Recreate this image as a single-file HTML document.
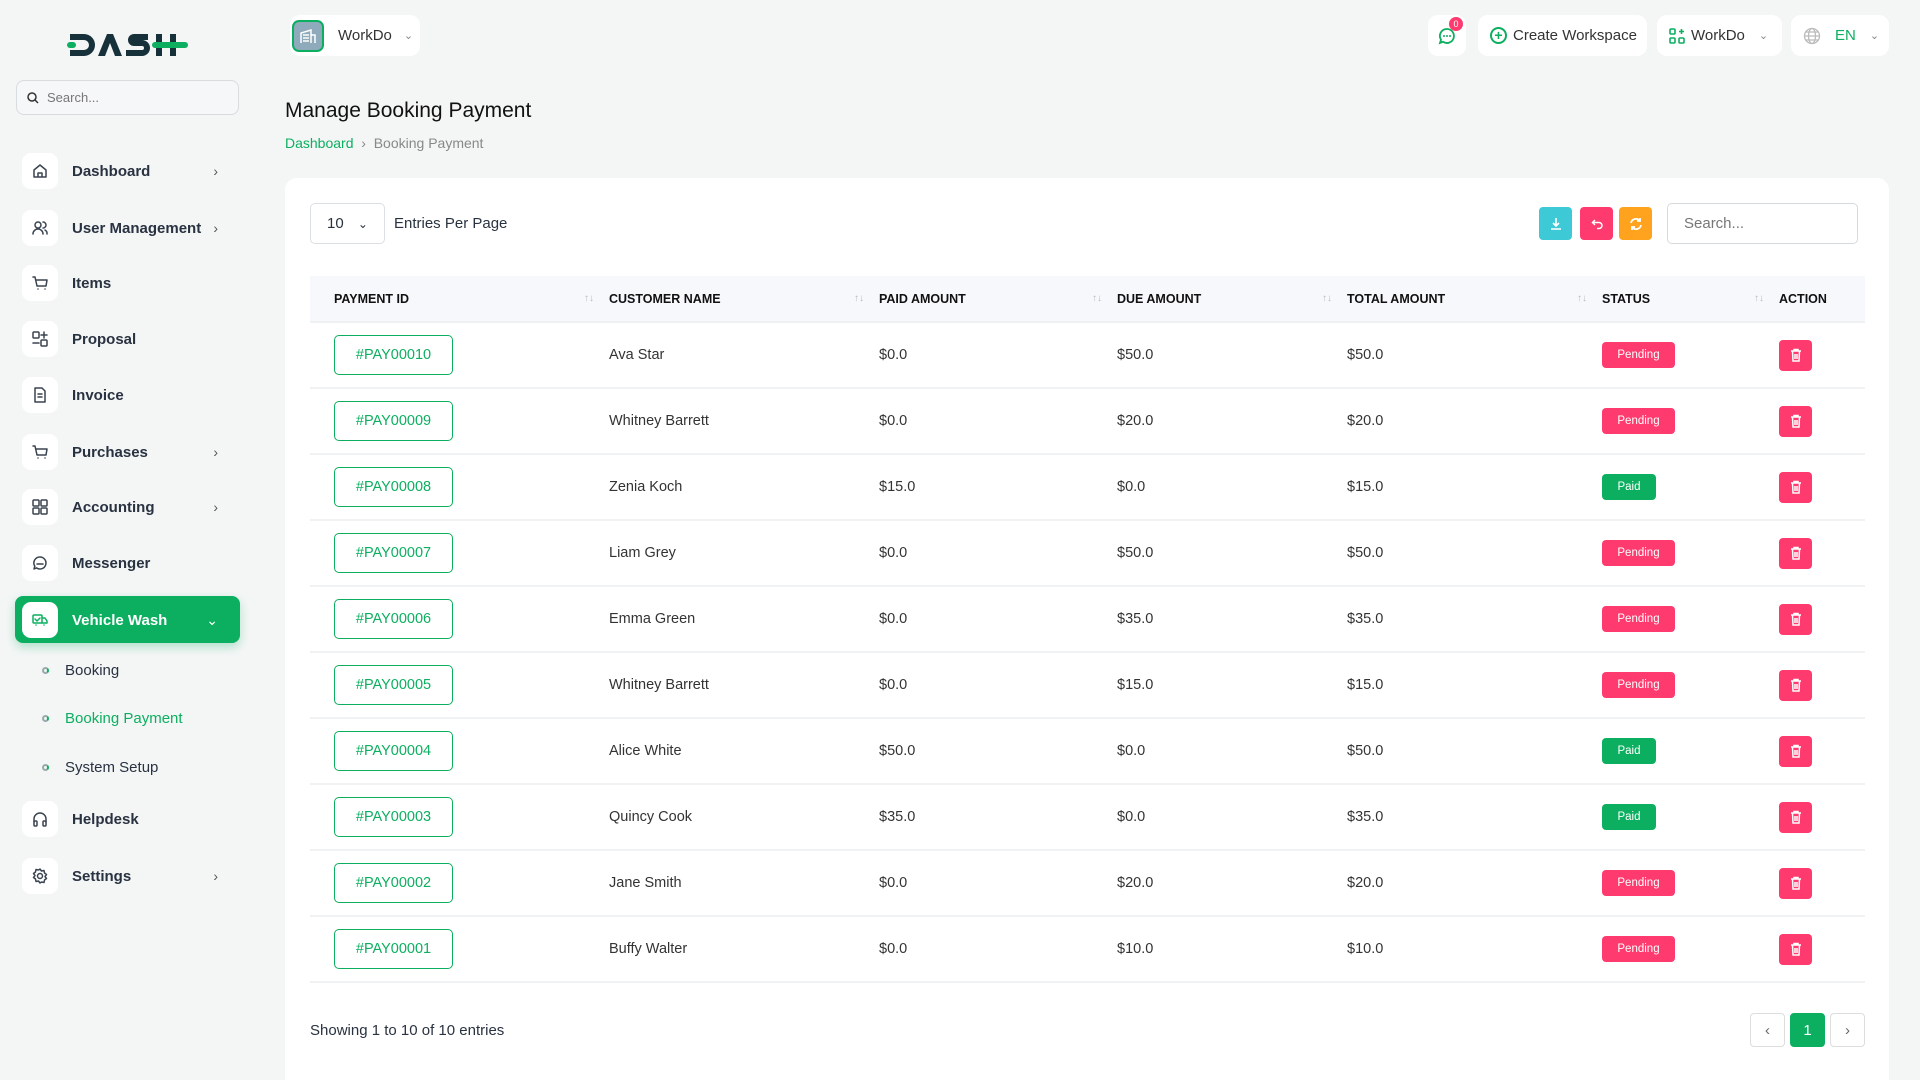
<!DOCTYPE html>
<html><head><meta charset="utf-8"><style>
*{box-sizing:border-box;margin:0;padding:0}
html{overflow:hidden;width:1920px;height:1080px}
body{width:1920px;height:1080px;overflow:hidden;background:#f4f6f6;font-family:"Liberation Sans",sans-serif;color:#293240;position:relative}
.abs{position:absolute}
.logo{left:64px;top:28px}
.sb-search{left:16px;top:80px;width:223px;height:35px;border:1px solid #d8dcdf;border-radius:8px;background:#f6f7f8;font-size:13px;color:#777;padding:9px 0 0 30px}
.nav{left:22px;width:210px;height:40px;display:flex;align-items:center;font-size:15px;font-weight:bold;color:#293240}
.nav .ic{width:36px;height:36px;background:#fff;border-radius:9px;display:flex;align-items:center;justify-content:center;margin-right:14px}
.nav .ic svg{width:18px;height:18px;fill:none;stroke:#3a4450;stroke-width:1.5;stroke-linecap:round;stroke-linejoin:round}
.nav .ch{position:absolute;right:14px;font-weight:normal;color:#555;font-size:14px}
.active{left:15px;width:225px;height:47px;top:596px;background:#0caf60;border-radius:8px;box-shadow:0 4px 10px rgba(12,175,96,.3)}
.sub{left:42px;font-size:15px;color:#293240;display:flex;align-items:center}
.sub i{width:7px;height:7px;border:2px solid #9aa;border-radius:50%;margin-right:16px;border-right-color:#0caf60}
.tb{background:#fff;border-radius:10px;height:41px;top:15px;display:flex;align-items:center;font-size:15px;color:#333}
h1{position:absolute;left:285px;top:99px;font-size:21px;font-weight:normal;color:#111}
.bc{left:285px;top:135px;font-size:14px;color:#888}
.card{left:285px;top:178px;width:1604px;height:902px;background:#fff;border-radius:12px 12px 0 0}
.btn{width:33px;height:33px;border-radius:4px;top:207px;display:flex;align-items:center;justify-content:center}
table{position:absolute;left:310px;top:276px;width:1555px;border-collapse:collapse;font-size:14.5px}
th{height:46px;background:#f6f8fb;text-align:left;font-size:12.5px;font-weight:bold;color:#111;position:relative;border-bottom:2px solid #eef0f2}
td{height:66px;border-bottom:2px solid #f0f2f3;color:#333}
.sa{position:absolute;color:#bbb;font-size:10px;font-weight:normal;top:17px}
.pid{display:inline-block;width:119px;height:40px;border:1px solid #0caf60;border-radius:5px;color:#0caf60;text-align:center;line-height:38px;font-size:14.5px}
.pe{display:inline-block;width:73px;height:26px;border-radius:4px;background:#ff3a6e;color:#fff;font-size:11.5px;text-align:center;line-height:26px}
.pa{display:inline-block;width:54px;height:26px;border-radius:4px;background:#0caf60;color:#fff;font-size:11.5px;text-align:center;line-height:26px}
.del{display:inline-block;width:33px;height:31px;border-radius:4px;background:#ff3a6e;vertical-align:middle;text-align:center;padding-top:8px}
.pg{top:1013px;width:35px;height:34px;border:1px solid #ddd;border-radius:4px;display:flex;align-items:center;justify-content:center;color:#666;font-size:15px;background:#fff}
</style></head><body>
<div class="abs logo"><svg width="126" height="34" viewBox="0 0 126 34">
<g fill="#17313b">
<path d="M6 6h14a11 11 0 0 1 0 22H6v-6h14a5 5 0 0 0 0-10H6z"/>
<path d="M34 28l9-22h6l9 22h-7l-5-13-5 13z"/>
<path d="M84 6H70a6 6 0 0 0 0 12h8a2 2 0 0 1 0 4H62v6h16a8 8 0 0 0 0-16h-8V12h14z"/>
<rect x="92" y="6" width="6" height="22"/><rect x="106" y="6" width="6" height="22"/></g>
<rect x="3" y="14" width="9" height="6" rx="3" fill="#0caf60"/>
<rect x="88" y="14" width="36" height="6" rx="3" fill="#0caf60"/></svg></div>
<div class="abs sb-search"><svg class="abs" style="left:10px;top:11px" width="12" height="12" viewBox="0 0 12 12"><circle cx="5" cy="5" r="4" fill="none" stroke="#333" stroke-width="1.5"/><path d="M8 8l3 3" stroke="#333" stroke-width="1.5"/></svg>Search...</div>

<div class="abs nav" style="top:151px"><span class="ic"><svg viewBox="0 0 18 18"><path d="M3 8l6-5 6 5v7H3z M7 15v-4h4v4"/></svg></span>Dashboard<span class="ch">›</span></div>
<div class="abs nav" style="top:208px"><span class="ic"><svg viewBox="0 0 18 18"><circle cx="7" cy="6" r="3"/><path d="M2 15a5 5 0 0 1 10 0M12 3a3 3 0 0 1 0 6M14 11a4 4 0 0 1 2 4"/></svg></span>User Management<span class="ch">›</span></div>
<div class="abs nav" style="top:263px"><span class="ic"><svg viewBox="0 0 18 18"><path d="M2 3h2l2 9h9l1-6H5M7 15h.01M14 15h.01"/></svg></span>Items</div>
<div class="abs nav" style="top:319px"><span class="ic"><svg viewBox="0 0 18 18"><rect x="2" y="2" width="6" height="6" rx="1"/><rect x="10" y="10" width="6" height="6" rx="1"/><path d="M10 5h6M13 2v6M2 13h6"/></svg></span>Proposal</div>
<div class="abs nav" style="top:375px"><span class="ic"><svg viewBox="0 0 18 18"><path d="M4 2h7l3 3v11H4z M7 8h4M7 11h4"/></svg></span>Invoice</div>
<div class="abs nav" style="top:432px"><span class="ic"><svg viewBox="0 0 18 18"><path d="M2 3h2l2 9h9l1-6H5M7 15h.01M14 15h.01"/></svg></span>Purchases<span class="ch">›</span></div>
<div class="abs nav" style="top:487px"><span class="ic"><svg viewBox="0 0 18 18"><rect x="2" y="2" width="6" height="6" rx="1"/><rect x="10" y="2" width="6" height="6" rx="1"/><rect x="2" y="10" width="6" height="6" rx="1"/><rect x="10" y="10" width="6" height="6" rx="1"/></svg></span>Accounting<span class="ch">›</span></div>
<div class="abs nav" style="top:543px"><span class="ic"><svg viewBox="0 0 18 18"><path d="M9 3a6 6 0 1 1-3.5 10.9L3 15l.8-2.8A6 6 0 0 1 9 3zM6 10h6"/></svg></span>Messenger</div>
<div class="abs active"></div>
<div class="abs nav" style="top:600px;color:#fff"><span class="ic"><svg viewBox="0 0 18 18" style="stroke:#0caf60"><rect x="2" y="4" width="9" height="8" rx="1"/><path d="M11 7h3l2 3v2h-5M5 14h.01M13 14h.01M4 8l2 2 3-3"/></svg></span>Vehicle Wash<span class="ch" style="color:#fff">⌄</span></div>
<div class="abs sub" style="top:662px"><i></i>Booking</div>
<div class="abs sub" style="top:710px;color:#0caf60"><i></i>Booking Payment</div>
<div class="abs sub" style="top:759px"><i></i>System Setup</div>
<div class="abs nav" style="top:799px"><span class="ic"><svg viewBox="0 0 18 18"><path d="M3 12V9a6 6 0 0 1 12 0v3"/><rect x="3" y="11" width="3" height="5" rx="1"/><rect x="12" y="11" width="3" height="5" rx="1"/></svg></span>Helpdesk</div>
<div class="abs nav" style="top:856px"><span class="ic"><svg viewBox="0 0 18 18"><circle cx="9" cy="9" r="2.5"/><path d="M9 2l1.5 2 2.5-.5.5 2.5 2 1.5-1.5 2 1.5 2-2 1.5-.5 2.5-2.5-.5L9 16l-1.5-2-2.5.5-.5-2.5-2-1.5 1.5-2-1.5-2 2-1.5.5-2.5 2.5.5z"/></svg></span>Settings<span class="ch">›</span></div>

<div class="abs tb" style="left:290px;width:130px"><span style="width:32px;height:32px;margin:0 14px 0 2px;border:2px solid #0caf60;border-radius:7px;background:#8eaabb;display:flex;align-items:center;justify-content:center"><svg width="18" height="16" viewBox="0 0 18 16" fill="none" stroke="#fff" stroke-width="1.5"><path d="M2 15V5l10-3v13M12 7h4v8M4 7h6M4 10h6M4 13h6"/></svg></span>WorkDo<span style="margin-left:12px;color:#888;font-size:11px">⌄</span></div>
<div class="abs tb" style="left:1428px;width:38px;justify-content:center"><svg width="20" height="20" viewBox="0 0 20 20"><path d="M10 3a7 7 0 1 1-4 12.8L3 17l1-3.2A7 7 0 0 1 10 3z" fill="none" stroke="#0caf60" stroke-width="1.8"/><circle cx="7" cy="10" r="1" fill="#0caf60"/><circle cx="10" cy="10" r="1" fill="#0caf60"/><circle cx="13" cy="10" r="1" fill="#0caf60"/></svg><span class="abs" style="left:21px;top:2px;width:14px;height:14px;border-radius:50%;background:#ff3a6e;color:#fff;font-size:9px;text-align:center;line-height:14px">0</span></div>
<div class="abs tb" style="left:1478px;width:169px;padding-left:12px"><span style="width:17px;height:17px;border:2px solid #0caf60;border-radius:50%;color:#0caf60;font-size:14px;line-height:12px;text-align:center;margin-right:6px;font-weight:bold">+</span>Create Workspace</div>
<div class="abs tb" style="left:1657px;width:125px;padding-left:12px"><svg width="16" height="16" viewBox="0 0 16 16" fill="none" stroke="#0caf60" stroke-width="1.6" style="margin-right:6px"><rect x="1" y="1" width="5" height="5" rx="1"/><rect x="1" y="10" width="5" height="5" rx="1"/><rect x="10" y="10" width="5" height="5" rx="1"/><path d="M12.5 1v5M10 3.5h5"/></svg>WorkDo<span style="margin-left:14px;color:#888;font-size:11px">⌄</span></div>
<div class="abs tb" style="left:1791px;width:98px;padding-left:12px"><svg width="18" height="18" viewBox="0 0 18 18" fill="none" stroke="#bbb" stroke-width="1.3" style="margin-right:14px"><circle cx="9" cy="9" r="7.5"/><ellipse cx="9" cy="9" rx="3.5" ry="7.5"/><path d="M1.5 9h15M3 5h12M3 13h12"/></svg><span style="color:#0caf60">EN</span><span style="margin-left:14px;color:#888;font-size:11px">⌄</span></div>

<h1>Manage Booking Payment</h1>
<div class="abs bc"><span style="color:#0caf60">Dashboard</span> &nbsp;›&nbsp; Booking Payment</div>

<div class="abs card"></div>
<div class="abs" style="left:310px;top:203px;width:75px;height:41px;border:1px solid #dcdfe3;border-radius:5px;font-size:15px;padding:11px 0 0 16px">10 <span style="margin-left:10px;font-size:12px">⌄</span></div>
<div class="abs" style="left:394px;top:215px;font-size:15px">Entries Per Page</div>
<div class="abs btn" style="left:1539px;background:#3ec9d6"><svg width="14" height="14" viewBox="0 0 14 14" fill="none" stroke="#fff" stroke-width="1.6"><path d="M7 1v8M4 6l3 3 3-3M2 12h10"/></svg></div>
<div class="abs btn" style="left:1580px;background:#ff3a6e"><svg width="12" height="12" viewBox="0 0 12 12" fill="none" stroke="#fff" stroke-width="1.5"><path d="M4 2L1.5 4.5 4 7M1.5 4.5H8a3 3 0 0 1 0 6H6"/></svg></div>
<div class="abs btn" style="left:1619px;background:#ffa21d"><svg width="14" height="14" viewBox="0 0 14 14" fill="none" stroke="#fff" stroke-width="1.8"><path d="M2 6a5 5 0 0 1 9-2M12 8a5 5 0 0 1-9 2M11 1v3H8M3 13v-3h3"/></svg></div>
<div class="abs" style="left:1667px;top:203px;width:191px;height:41px;border:1px solid #d6dadd;border-radius:5px;font-size:15px;color:#777;padding:11px 0 0 16px">Search...</div>

<table>
<tr><th style="width:299px;padding-left:24px">PAYMENT ID<span class="sa" style="left:274px">↑↓</span></th><th style="width:270px;padding-left:0">CUSTOMER NAME<span class="sa" style="left:245px">↑↓</span></th><th style="width:238px">PAID AMOUNT<span class="sa" style="left:213px">↑↓</span></th><th style="width:230px">DUE AMOUNT<span class="sa" style="left:205px">↑↓</span></th><th style="width:255px">TOTAL AMOUNT<span class="sa" style="left:230px">↑↓</span></th><th style="width:177px">STATUS<span class="sa" style="left:152px">↑↓</span></th><th>ACTION</th></tr>
<tr><td style="padding-left:24px"><span class="pid">#PAY00010</span></td><td>Ava Star</td><td>$0.0</td><td>$50.0</td><td>$50.0</td><td><span class="pe">Pending</span></td><td><span class="del"><svg width="12" height="14" viewBox="0 0 12 14" fill="none" stroke="#fff" stroke-width="1.5"><path d="M1 3h10M4 3V1.5h4V3M2.5 3l.5 10h6l.5-10M5 6v5M7 6v5"/></svg></span></td></tr>
<tr><td style="padding-left:24px"><span class="pid">#PAY00009</span></td><td>Whitney Barrett</td><td>$0.0</td><td>$20.0</td><td>$20.0</td><td><span class="pe">Pending</span></td><td><span class="del"><svg width="12" height="14" viewBox="0 0 12 14" fill="none" stroke="#fff" stroke-width="1.5"><path d="M1 3h10M4 3V1.5h4V3M2.5 3l.5 10h6l.5-10M5 6v5M7 6v5"/></svg></span></td></tr>
<tr><td style="padding-left:24px"><span class="pid">#PAY00008</span></td><td>Zenia Koch</td><td>$15.0</td><td>$0.0</td><td>$15.0</td><td><span class="pa">Paid</span></td><td><span class="del"><svg width="12" height="14" viewBox="0 0 12 14" fill="none" stroke="#fff" stroke-width="1.5"><path d="M1 3h10M4 3V1.5h4V3M2.5 3l.5 10h6l.5-10M5 6v5M7 6v5"/></svg></span></td></tr>
<tr><td style="padding-left:24px"><span class="pid">#PAY00007</span></td><td>Liam Grey</td><td>$0.0</td><td>$50.0</td><td>$50.0</td><td><span class="pe">Pending</span></td><td><span class="del"><svg width="12" height="14" viewBox="0 0 12 14" fill="none" stroke="#fff" stroke-width="1.5"><path d="M1 3h10M4 3V1.5h4V3M2.5 3l.5 10h6l.5-10M5 6v5M7 6v5"/></svg></span></td></tr>
<tr><td style="padding-left:24px"><span class="pid">#PAY00006</span></td><td>Emma Green</td><td>$0.0</td><td>$35.0</td><td>$35.0</td><td><span class="pe">Pending</span></td><td><span class="del"><svg width="12" height="14" viewBox="0 0 12 14" fill="none" stroke="#fff" stroke-width="1.5"><path d="M1 3h10M4 3V1.5h4V3M2.5 3l.5 10h6l.5-10M5 6v5M7 6v5"/></svg></span></td></tr>
<tr><td style="padding-left:24px"><span class="pid">#PAY00005</span></td><td>Whitney Barrett</td><td>$0.0</td><td>$15.0</td><td>$15.0</td><td><span class="pe">Pending</span></td><td><span class="del"><svg width="12" height="14" viewBox="0 0 12 14" fill="none" stroke="#fff" stroke-width="1.5"><path d="M1 3h10M4 3V1.5h4V3M2.5 3l.5 10h6l.5-10M5 6v5M7 6v5"/></svg></span></td></tr>
<tr><td style="padding-left:24px"><span class="pid">#PAY00004</span></td><td>Alice White</td><td>$50.0</td><td>$0.0</td><td>$50.0</td><td><span class="pa">Paid</span></td><td><span class="del"><svg width="12" height="14" viewBox="0 0 12 14" fill="none" stroke="#fff" stroke-width="1.5"><path d="M1 3h10M4 3V1.5h4V3M2.5 3l.5 10h6l.5-10M5 6v5M7 6v5"/></svg></span></td></tr>
<tr><td style="padding-left:24px"><span class="pid">#PAY00003</span></td><td>Quincy Cook</td><td>$35.0</td><td>$0.0</td><td>$35.0</td><td><span class="pa">Paid</span></td><td><span class="del"><svg width="12" height="14" viewBox="0 0 12 14" fill="none" stroke="#fff" stroke-width="1.5"><path d="M1 3h10M4 3V1.5h4V3M2.5 3l.5 10h6l.5-10M5 6v5M7 6v5"/></svg></span></td></tr>
<tr><td style="padding-left:24px"><span class="pid">#PAY00002</span></td><td>Jane Smith</td><td>$0.0</td><td>$20.0</td><td>$20.0</td><td><span class="pe">Pending</span></td><td><span class="del"><svg width="12" height="14" viewBox="0 0 12 14" fill="none" stroke="#fff" stroke-width="1.5"><path d="M1 3h10M4 3V1.5h4V3M2.5 3l.5 10h6l.5-10M5 6v5M7 6v5"/></svg></span></td></tr>
<tr><td style="padding-left:24px"><span class="pid">#PAY00001</span></td><td>Buffy Walter</td><td>$0.0</td><td>$10.0</td><td>$10.0</td><td><span class="pe">Pending</span></td><td><span class="del"><svg width="12" height="14" viewBox="0 0 12 14" fill="none" stroke="#fff" stroke-width="1.5"><path d="M1 3h10M4 3V1.5h4V3M2.5 3l.5 10h6l.5-10M5 6v5M7 6v5"/></svg></span></td></tr>
</table>

<div class="abs" style="left:310px;top:1022px;font-size:15px">Showing 1 to 10 of 10 entries</div>
<div class="abs pg" style="left:1750px">‹</div>
<div class="abs pg" style="left:1790px;background:#0caf60;border-color:#0caf60;color:#fff">1</div>
<div class="abs pg" style="left:1830px">›</div>
</body></html>
